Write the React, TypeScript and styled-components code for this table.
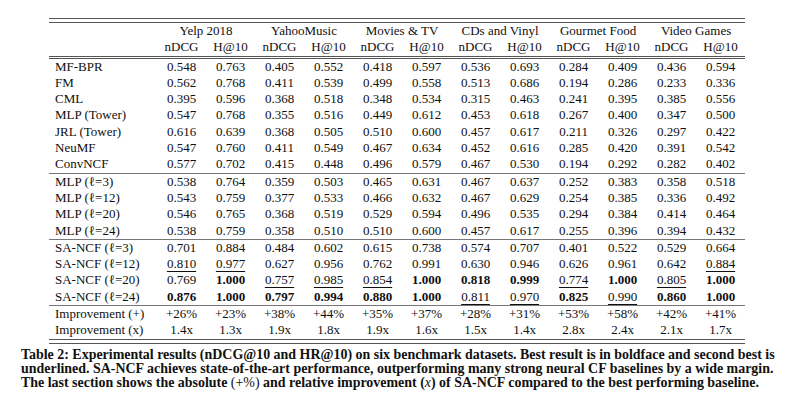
import React from "react";
import styled, { createGlobalStyle } from "styled-components";

const GlobalStyle = createGlobalStyle`
  html, body {
    margin: 0;
    padding: 0;
    background: #ffffff;
  }
  body {
    font-family: "Liberation Serif", "Times New Roman", serif;
    color: #0f0f0f;
  }
`;

type Mark = "b" | "u" | "";

type Row = {
  name: string;
  values: string[];
  marks?: Mark[];
};

const datasets = [
  "Yelp 2018",
  "YahooMusic",
  "Movies & TV",
  "CDs and Vinyl",
  "Gourmet Food",
  "Video Games",
];

const baselines: Row[] = [
  { name: "MF-BPR", values: ["0.548", "0.763", "0.405", "0.552", "0.418", "0.597", "0.536", "0.693", "0.284", "0.409", "0.436", "0.594"] },
  { name: "FM", values: ["0.562", "0.768", "0.411", "0.539", "0.499", "0.558", "0.513", "0.686", "0.194", "0.286", "0.233", "0.336"] },
  { name: "CML", values: ["0.395", "0.596", "0.368", "0.518", "0.348", "0.534", "0.315", "0.463", "0.241", "0.395", "0.385", "0.556"] },
  { name: "MLP (Tower)", values: ["0.547", "0.768", "0.355", "0.516", "0.449", "0.612", "0.453", "0.618", "0.267", "0.400", "0.347", "0.500"] },
  { name: "JRL (Tower)", values: ["0.616", "0.639", "0.368", "0.505", "0.510", "0.600", "0.457", "0.617", "0.211", "0.326", "0.297", "0.422"] },
  { name: "NeuMF", values: ["0.547", "0.760", "0.411", "0.549", "0.467", "0.634", "0.452", "0.616", "0.285", "0.420", "0.391", "0.542"] },
  { name: "ConvNCF", values: ["0.577", "0.702", "0.415", "0.448", "0.496", "0.579", "0.467", "0.530", "0.194", "0.292", "0.282", "0.402"] },
];

const mlps: Row[] = [
  { name: "MLP (ℓ=3)", values: ["0.538", "0.764", "0.359", "0.503", "0.465", "0.631", "0.467", "0.637", "0.252", "0.383", "0.358", "0.518"] },
  { name: "MLP (ℓ=12)", values: ["0.543", "0.759", "0.377", "0.533", "0.466", "0.632", "0.467", "0.629", "0.254", "0.385", "0.336", "0.492"] },
  { name: "MLP (ℓ=20)", values: ["0.546", "0.765", "0.368", "0.519", "0.529", "0.594", "0.496", "0.535", "0.294", "0.384", "0.414", "0.464"] },
  { name: "MLP (ℓ=24)", values: ["0.538", "0.759", "0.358", "0.510", "0.510", "0.600", "0.457", "0.617", "0.255", "0.396", "0.394", "0.432"] },
];

const ours: Row[] = [
  { name: "SA-NCF (ℓ=3)", values: ["0.701", "0.884", "0.484", "0.602", "0.615", "0.738", "0.574", "0.707", "0.401", "0.522", "0.529", "0.664"] },
  {
    name: "SA-NCF (ℓ=12)",
    values: ["0.810", "0.977", "0.627", "0.956", "0.762", "0.991", "0.630", "0.946", "0.626", "0.961", "0.642", "0.884"],
    marks: ["u", "u", "", "", "", "", "", "", "", "", "", "u"],
  },
  {
    name: "SA-NCF (ℓ=20)",
    values: ["0.769", "1.000", "0.757", "0.985", "0.854", "1.000", "0.818", "0.999", "0.774", "1.000", "0.805", "1.000"],
    marks: ["", "b", "u", "u", "u", "b", "b", "b", "u", "b", "u", "b"],
  },
  {
    name: "SA-NCF (ℓ=24)",
    values: ["0.876", "1.000", "0.797", "0.994", "0.880", "1.000", "0.811", "0.970", "0.825", "0.990", "0.860", "1.000"],
    marks: ["b", "b", "b", "b", "b", "b", "u", "u", "b", "u", "b", "b"],
  },
];

const improvements: Row[] = [
  { name: "Improvement (+)", values: ["+26%", "+23%", "+38%", "+44%", "+35%", "+37%", "+28%", "+31%", "+53%", "+58%", "+42%", "+41%"] },
  { name: "Improvement (x)", values: ["1.4x", "1.3x", "1.9x", "1.8x", "1.9x", "1.6x", "1.5x", "1.4x", "2.8x", "2.4x", "2.1x", "1.7x"] },
];

const Page = styled.div`
  width: 800px;
  height: 418px;
  box-sizing: border-box;
  padding: 18px 10px 0 21px;
  display: flex;
  flex-direction: column;
  overflow: hidden;
`;

const TableFrame = styled.div`
  margin-left: 28px;
  width: 696px;
  border-top: 1px solid #555;
  border-bottom: 1px solid #555;
  padding: 3px 0;
`;

const Table = styled.table`
  width: 100%;
  border-collapse: collapse;
  table-layout: fixed;
  font-size: 13px;
  border-top: 1px solid #555;
  border-bottom: 1px solid #555;
`;

const LabelCol = styled.col`
  width: 108px;
`;

const ValueCol = styled.col`
  width: 49px;
`;

const Tr = styled.tr<{ $rule?: "single" | "double" }>`
  height: 16.3px;
  border-top: ${(p) =>
    p.$rule === "double"
      ? "3px double #555"
      : p.$rule === "single"
        ? "1px solid #777"
        : "none"};
`;

const Th = styled.th`
  font-weight: normal;
  text-align: center;
  padding: 0;
  line-height: 16.3px;
  white-space: nowrap;
`;

const Name = styled.td`
  text-align: left;
  padding: 0 0 0 6px;
  line-height: 16.3px;
  white-space: nowrap;
`;

const Value = styled.td<{ $mark?: Mark }>`
  text-align: center;
  padding: 0;
  line-height: 16.3px;
  white-space: nowrap;
  font-weight: ${(p) => (p.$mark === "b" ? "bold" : "normal")};
`;

const Under = styled.span`
  text-decoration: underline;
  text-decoration-thickness: 1px;
  text-underline-offset: 3px;
`;

const Caption = styled.p`
  margin: 4px 0 0;
  font-weight: bold;
  font-size: 13.95px;
  line-height: 14px;
  white-space: nowrap;
  color: #111;
`;

const Plain = styled.span`
  font-weight: normal;
`;

const Var = styled.span`
  font-weight: normal;
  font-style: italic;
`;

function Section({ rows, first }: { rows: Row[]; first?: "single" | "double" }) {
  return (
    <>
      {rows.map((r, i) => (
        <Tr key={r.name} $rule={i === 0 ? first : undefined}>
          <Name>{r.name}</Name>
          {r.values.map((v, j) => {
            const m = r.marks ? r.marks[j] : "";
            return (
              <Value key={j} $mark={m}>
                {m === "u" ? <Under>{v}</Under> : v}
              </Value>
            );
          })}
        </Tr>
      ))}
    </>
  );
}

export default function App() {
  return (
    <>
      <GlobalStyle />
      <Page>
        <TableFrame>
          <Table>
            <colgroup>
              <LabelCol />
              {Array.from({ length: 12 }).map((_, i) => (
                <ValueCol key={i} />
              ))}
            </colgroup>
            <thead>
              <Tr>
                <Th />
                {datasets.map((d) => (
                  <Th key={d} colSpan={2}>
                    {d}
                  </Th>
                ))}
              </Tr>
              <Tr>
                <Th />
                {datasets.map((d) => (
                  <React.Fragment key={d}>
                    <Th>nDCG</Th>
                    <Th>H@10</Th>
                  </React.Fragment>
                ))}
              </Tr>
            </thead>
            <tbody>
              <Section rows={baselines} first="double" />
              <Section rows={mlps} first="single" />
              <Section rows={ours} first="single" />
              <Section rows={improvements} first="single" />
            </tbody>
          </Table>
        </TableFrame>
        <Caption>
          Table 2: Experimental results (nDCG@10 and HR@10) on six benchmark datasets. Best result is in boldface and second best is
          <br />
          underlined. SA-NCF achieves state-of-the-art performance, outperforming many strong neural CF baselines by a wide margin.
          <br />
          The last section shows the absolute <Plain>(+%)</Plain> and relative improvement (<Var>x</Var>) of SA-NCF compared to the
          best performing baseline.
        </Caption>
      </Page>
    </>
  );
}
